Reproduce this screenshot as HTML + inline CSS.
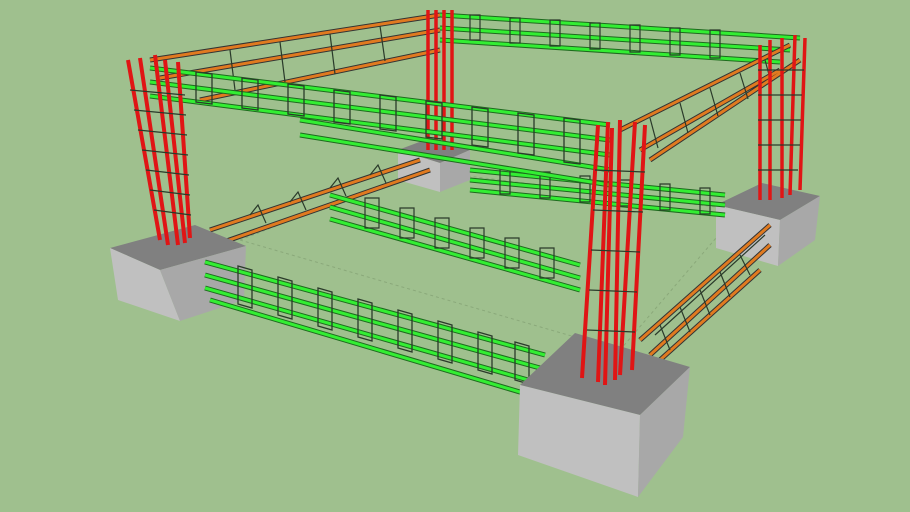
<!DOCTYPE html>
<html><head><meta charset="utf-8"><style>html,body{margin:0;padding:0;background:#9fc08e;overflow:hidden}svg{display:block}</style></head>
<body>
<svg width="910" height="512" viewBox="0 0 910 512" xmlns="http://www.w3.org/2000/svg">
<rect width="910" height="512" fill="#9fc08e"/>
<g stroke="#8aa87a" stroke-width="1" stroke-dasharray="3 3" fill="none">
<path d="M240 240 L620 350 M420 170 L740 210 M240 240 L420 170 M620 350 L740 210"/>
</g>
<!-- back-right footing -->
<polygon points="716,205 762,183 820,196 780,220" fill="#808080"/>
<polygon points="716,205 780,220 778,266 716,248" fill="#c0c0c0"/>
<polygon points="780,220 820,196 815,240 778,266" fill="#a8a8a8"/>
<!-- back-left footing -->
<polygon points="398,150 430,138 470,150 440,163" fill="#808080"/>
<polygon points="398,150 440,163 440,192 398,180" fill="#c0c0c0"/>
<polygon points="440,163 470,150 470,180 440,192" fill="#a8a8a8"/>
<!-- lower back beam -->
<g stroke="#1e6a1e" stroke-width="5" fill="none"><path d="M470 170 L725 195 M470 180 L725 205 M470 190 L725 215"/></g>
<g stroke="#33ee33" stroke-width="3" fill="none"><path d="M470 170 L725 195 M470 180 L725 205 M470 190 L725 215"/></g>
<g stroke="#2a3a2a" stroke-width="1.2" fill="none"><path d="M500 168 v26 h10 v-26z M540 172 v26 h10 v-26z M580 176 v26 h10 v-26z M620 180 v26 h10 v-26z M660 184 v26 h10 v-26z M700 188 v26 h10 v-26z"/></g>
<!-- lower left beam orange -->
<g stroke="#333" stroke-width="5" fill="none"><path d="M210 230 L420 160 M215 245 L430 170"/></g>
<g stroke="#e07a20" stroke-width="3" fill="none"><path d="M210 230 L420 160 M215 245 L430 170"/></g>
<g stroke="#2a3a2a" stroke-width="1.2" fill="none"><path d="M250 215 l8 -10 l8 18 M290 202 l8 -10 l8 18 M330 188 l8 -10 l8 18 M370 175 l8 -10 l8 18"/></g>
<!-- lower middle green beam -->
<g stroke="#1e6a1e" stroke-width="5" fill="none"><path d="M330 195 L580 265 M330 207 L580 278 M330 219 L580 290"/></g>
<g stroke="#33ee33" stroke-width="3" fill="none"><path d="M330 195 L580 265 M330 207 L580 278 M330 219 L580 290"/></g>
<g stroke="#2a3a2a" stroke-width="1.2" fill="none"><path d="M365 198 v30 h14 v-30z M400 208 v30 h14 v-30z M435 218 v30 h14 v-30z M470 228 v30 h14 v-30z M505 238 v30 h14 v-30z M540 248 v30 h14 v-30z"/></g>
<!-- lower right beam orange -->
<g stroke="#333" stroke-width="5" fill="none"><path d="M640 340 L770 225 M650 355 L770 245 M660 360 L760 270"/></g>
<g stroke="#e07a20" stroke-width="3" fill="none"><path d="M640 340 L770 225 M650 355 L770 245 M660 360 L760 270"/></g>
<g stroke="#2a3a2a" stroke-width="1.2" fill="none"><path d="M660 325 l10 25 M680 307 l10 25 M700 290 l10 25 M720 272 l10 25 M740 255 l10 20 M655 335 l110 -100"/></g>
<!-- top back beam -->
<g stroke="#1e6a1e" stroke-width="5" fill="none"><path d="M440 15 L800 38 M440 28 L790 50 M440 40 L780 62"/></g>
<g stroke="#33ee33" stroke-width="3" fill="none"><path d="M440 15 L800 38 M440 28 L790 50 M440 40 L780 62"/></g>
<g stroke="#2a3a2a" stroke-width="1.2" fill="none"><path d="M470 15 v25 h10 v-25z M510 18 v25 h10 v-25z M550 20 v26 h10 v-26z M590 23 v26 h10 v-26z M630 25 v27 h10 v-27z M670 28 v27 h10 v-27z M710 30 v28 h10 v-28z"/></g>
<!-- top left beam orange -->
<g stroke="#333" stroke-width="5" fill="none"><path d="M150 60 L440 15 M160 78 L440 30 M200 100 L440 50"/></g>
<g stroke="#e07a20" stroke-width="3" fill="none"><path d="M150 60 L440 15 M160 78 L440 30 M200 100 L440 50"/></g>
<g stroke="#2a3a2a" stroke-width="1.2" fill="none"><path d="M230 50 l5 40 M280 42 l5 40 M330 34 l5 40 M380 26 l5 35"/></g>
<!-- back-left column -->
<g stroke="#e01515" stroke-width="3.5"><path d="M428 10 L428 150 M436 10 L436 150 M444 10 L444 150 M452 10 L452 150"/></g>
<!-- top right beam orange -->
<g stroke="#333" stroke-width="5" fill="none"><path d="M790 45 L620 130 M800 60 L650 160 M780 70 L640 150"/></g>
<g stroke="#e07a20" stroke-width="3" fill="none"><path d="M790 45 L620 130 M800 60 L650 160 M780 70 L640 150"/></g>
<g stroke="#2a3a2a" stroke-width="1.2" fill="none"><path d="M650 118 l8 30 M680 103 l8 30 M710 88 l8 28 M740 73 l8 26 M765 60 l6 22"/></g>
<!-- back-right column -->
<g stroke="#e01515" stroke-width="3.5"><path d="M760 45 L760 200 M770 40 L770 200 M782 38 L782 198 M795 35 L790 195 M805 38 L800 190"/></g>
<g stroke="#2a3a2a" stroke-width="1.2"><path d="M758 70 h46 M758 95 h44 M758 120 h43 M758 145 h42 M758 170 h40"/></g>
<!-- top front beam -->
<g stroke="#1e6a1e" stroke-width="5" fill="none"><path d="M150 68 L610 125 M150 82 L610 140 M150 96 L610 155 M300 120 L610 170 M300 135 L610 185"/></g>
<g stroke="#33ee33" stroke-width="3" fill="none"><path d="M150 68 L610 125 M150 82 L610 140 M150 96 L610 155 M300 120 L610 170 M300 135 L610 185"/></g>
<g stroke="#2a3a2a" stroke-width="1.3" fill="none">
<path d="M196 72 l16 2 v30 l-16 -2z M242 78 l16 2 v30 l-16 -2z M288 84 l16 2 v30 l-16 -2z M334 90 l16 2 v32 l-16 -2z M380 95 l16 2 v34 l-16 -2z M426 101 l16 2 v36 l-16 -2z M472 107 l16 2 v38 l-16 -2z M518 113 l16 2 v40 l-16 -2z M564 118 l16 2 v44 l-16 -2z"/>
</g>
<!-- left footing -->
<polygon points="110,248 195,225 246,246 160,270" fill="#808080"/>
<polygon points="110,248 160,270 180,321 118,300" fill="#c0c0c0"/>
<polygon points="160,270 246,246 244,300 180,321" fill="#a8a8a8"/>
<!-- left column -->
<g stroke="#e01515" stroke-width="4"><path d="M128 60 L160 240 M140 58 L168 245 M155 55 L178 245 M165 60 L185 243 M178 62 L190 238"/></g>
<g stroke="#2a3a2a" stroke-width="1.2"><path d="M130 90 L185 95 M134 110 L186 115 M138 130 L187 135 M142 150 L188 155 M146 170 L189 175 M150 190 L190 195 M154 210 L191 215"/></g>
<!-- lower front beam -->
<g stroke="#1e6a1e" stroke-width="5" fill="none"><path d="M205 262 L545 355 M205 275 L540 368 M205 288 L535 382 M210 300 L530 395"/></g>
<g stroke="#33ee33" stroke-width="3" fill="none"><path d="M205 262 L545 355 M205 275 L540 368 M205 288 L535 382 M210 300 L530 395"/></g>
<g stroke="#2a3a2a" stroke-width="1.3" fill="none">
<path d="M238 266 l14 4 v38 l-14 -4z M278 277 l14 4 v38 l-14 -4z M318 288 l14 4 v38 l-14 -4z M358 299 l14 4 v38 l-14 -4z M398 310 l14 4 v38 l-14 -4z M438 321 l14 4 v38 l-14 -4z M478 332 l14 4 v38 l-14 -4z M515 342 l14 4 v38 l-14 -4z"/>
</g>
<!-- front footing -->
<polygon points="520,385 575,333 690,367 640,415" fill="#808080"/>
<polygon points="520,385 640,415 638,497 518,455" fill="#c0c0c0"/>
<polygon points="640,415 690,367 683,437 638,497" fill="#a8a8a8"/>
<!-- front column -->
<g stroke="#e01515" stroke-width="4"><path d="M598 125 L582 378 M608 122 L598 382 M620 120 L615 380 M635 122 L620 375 M645 125 L632 370 M612 128 L605 385"/></g>
<g stroke="#2a3a2a" stroke-width="1.2"><path d="M595 170 L645 172 M593 210 L643 212 M591 250 L640 252 M589 290 L637 292 M587 330 L635 332"/></g>
</svg>
</body></html>
